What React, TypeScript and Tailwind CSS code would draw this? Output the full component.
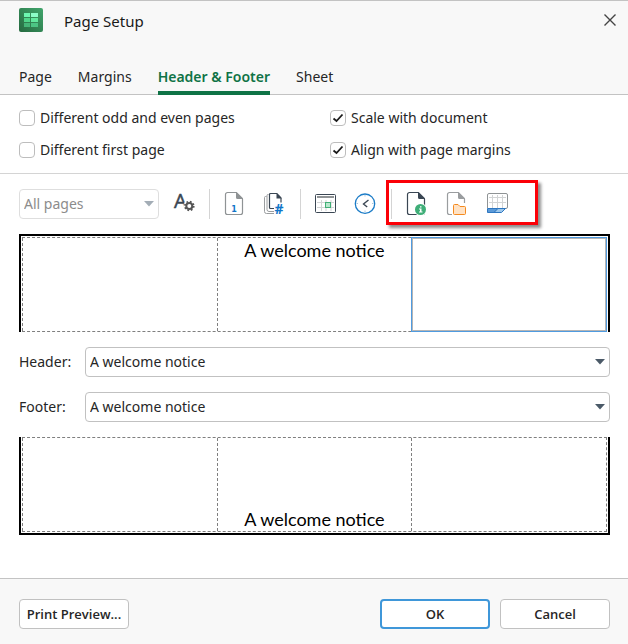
import { useState } from "react";
import type { ReactNode } from "react";

const tabs = ["Page", "Margins", "Header & Footer", "Sheet"];
const presets = ["A welcome notice", "(none)", "Page 1"];

const AppIcon = () => (
  <svg width="24" height="24" viewBox="0 0 24 24" aria-hidden="true">
    <defs>
      <linearGradient id="tile" x1="0" y1="1" x2="1" y2="0">
        <stop offset="0" stopColor="#25693f" />
        <stop offset="1" stopColor="#41a56c" />
      </linearGradient>
    </defs>
    <rect width="24" height="24" rx="2" fill="url(#tile)" />
    <path d="M5 5h6v4H5z" fill="#6df5b0" />
    <path d="M12 5h7v4h-7z" fill="#8cfcc8" />
    <path d="M5 10h6v4H5z" fill="#4fd489" />
    <path d="M12 10h7v4h-7z" fill="#62e89f" />
    <path d="M5 15h6v4H5z" fill="#45b577" />
    <path d="M12 15h7v4h-7z" fill="#4cc584" />
  </svg>
);

const Icon = ({ children }: { children: ReactNode }) => (
  <svg
    width="24"
    height="24"
    viewBox="0 0 24 24"
    fill="none"
    aria-hidden="true"
    className="overflow-visible font-['DejaVu_Sans',sans-serif]"
  >
    {children}
  </svg>
);

const FontIcon = () => (
  <Icon>
    <text
      x="2"
      y="16"
      fontSize="20"
      fill="#3a4653"
      stroke="#3a4653"
      strokeWidth="0.5"
      className="font-['Open_Sans',sans-serif]"
    >
      A
    </text>
    <circle cx="17.3" cy="14" r="6" fill="#fff" />
    <circle cx="17.3" cy="14" r="4.4" stroke="#555" strokeWidth="1.8" strokeDasharray="1.73 1.73" />
    <circle cx="17.3" cy="14" r="3" stroke="#555" strokeWidth="2" />
  </Icon>
);

const PageShape = ({ color }: { color: string }) => (
  <>
    <path
      d="M13.5.5h-9a2 2 0 0 0-2 2v18a2 2 0 0 0 2 2h13a2 2 0 0 0 2-2V7"
      stroke={color}
      strokeWidth="1.2"
    />
    <path d="M13 0h.7L20 6.3V7h-5.5A1.5 1.5 0 0 1 13 5.5z" fill={color} />
  </>
);

const PageNumberIcon = () => (
  <Icon>
    <PageShape color="#8f9395" />
    <text x="11" y="20" fontSize="8" fontWeight="700" textAnchor="middle" fill="#1176c8">
      1
    </text>
  </Icon>
);

const PageCountIcon = () => (
  <Icon>
    <path d="M3.5 4.5h-1a1 1 0 0 0-1 1v14a2 2 0 0 0 2 2H11" stroke="#9a9d9f" />
    <path d="M5.5 2.5H5a1 1 0 0 0-1 1v14a2 2 0 0 0 2 2h5" stroke="#9a9d9f" />
    <path d="M14 1.5H7.5a1 1 0 0 0-1 1v13a1 1 0 0 0 1 1H11M18 6v4.5" stroke="#3a4653" strokeWidth="1.2" />
    <path d="M13.5 1h.7L18.500 5.500v1h-5z" fill="#3a4653" />
    <text
      x="16"
      y="21.5"
      fontSize="14"
      fontWeight="700"
      textAnchor="middle"
      fill="#1176c8"
      className="font-['Open_Sans',sans-serif]"
    >
      #
    </text>
  </Icon>
);

const DateIcon = () => (
  <Icon>
    <rect x="1.5" y="2.5" width="20" height="18" rx="1" stroke="#3a4653" />
    <path d="M3 5h17" stroke="#8f9395" strokeWidth="2" />
    <path d="M3 10.5h17M3 15.5h17M7.5 8v11M12 8v11M17 8v11" stroke="#d2d4d5" />
    <rect x="11.5" y="10.5" width="5" height="5" fill="#b8e8cd" stroke="#41ae76" />
  </Icon>
);

const TimeIcon = () => (
  <Icon>
    <circle cx="11" cy="11.7" r="9.7" stroke="#1c7cc7" strokeWidth="1.3" />
    <path d="M14.5 8 9.5 12l3.7 3" stroke="#3a4653" strokeWidth="1.4" />
    <path d="M11 3v1.5M11 18.5V20M2.5 11.5H4M18 11.5h1.5" stroke="#a9c6dd" />
  </Icon>
);

const FilePathIcon = () => (
  <Icon>
    <PageShape color="#3a4653" />
    <circle cx="15.5" cy="17.5" r="6.5" fill="#fff" />
    <circle cx="15.5" cy="17.5" r="5.5" fill="#3fae78" />
    <path d="M15 14.2h1.5v1.3H15zM14 16.500h2.500v3h1v1H14v-1h1v-2h-1z" fill="#fff" />
  </Icon>
);

const FileNameIcon = () => (
  <Icon>
    <PageShape color="#9a9d9f" />
    <path d="M7 11h15v13H7z" fill="#fff" />
    <path
      d="M8.5 21.5v-8a1 1 0 0 1 1-1H13l2 2h4.5a1 1 0 0 1 1 1v6a1 1 0 0 1-1 1h-10a1 1 0 0 1-1-1z"
      fill="#ffe2c4"
      stroke="#f58a1f"
    />
  </Icon>
);

const SheetNameIcon = () => (
  <Icon>
    <path
      d="M2.5 16V3A1.5 1.5 0 0 1 4 1.5h17A1.5 1.5 0 0 1 22.5 3v12a1.5 1.5 0 0 1-1.5 1.5h-1"
      stroke="#8f9395"
    />
    <path d="M4 5.5h17M4 10.5h17M7.5 3v13M12.5 3v13M17.5 3v13" stroke="#d2d4d5" />
    <path d="M2.5 16.5h10.5l-4 4H2.500z" fill="#5b9ad8" stroke="#2d76c0" />
    <path d="M13 16.5h7.5l-4 4H9z" fill="#9cc7ec" stroke="#2d76c0" />
  </Icon>
);

const ToolButton = ({ label, children }: { label: string; children: ReactNode }) => (
  <button type="button" aria-label={label} title={label} className="h-6 w-6 shrink-0">
    {children}
  </button>
);

const Separator = () => <div className="mx-[13px] h-[30px] w-px shrink-0 bg-[#d4d4d4]" />;

const Arrow = ({ className }: { className: string }) => (
  <svg
    width="10"
    height="6"
    viewBox="0 0 10 6"
    aria-hidden="true"
    className={`pointer-events-none absolute top-3 right-[5px] ${className}`}
  >
    <path d="M0 0h10L5 5.5z" fill="currentColor" />
  </svg>
);

const CheckOption = ({ label, initial = false }: { label: string; initial?: boolean }) => {
  const [checked, setChecked] = useState(initial);
  return (
    <label className="flex h-8 items-center gap-[5px]">
      <span className="relative h-4 w-4 shrink-0">
        <input
          type="checkbox"
          checked={checked}
          onChange={(e) => setChecked(e.target.checked)}
          className="block h-4 w-4 appearance-none rounded border border-[#bdbdbd] bg-white"
        />
        {checked && (
          <svg
            width="16"
            height="16"
            viewBox="0 0 16 16"
            fill="none"
            aria-hidden="true"
            className="pointer-events-none absolute inset-0"
          >
            <path d="M3.5 8.5 6.5 11 12.5 4.5" stroke="#1a1a1a" strokeWidth="1.8" />
          </svg>
        )}
      </span>
      {label}
    </label>
  );
};

const PresetRow = ({
  id,
  label,
  value,
  onChange,
}: {
  id: string;
  label: string;
  value: string;
  onChange: (value: string) => void;
}) => (
  <div className="flex items-center">
    <label htmlFor={id} className="w-[66px] shrink-0">
      {label}
    </label>
    <div className="relative flex-1">
      <select
        id={id}
        value={value}
        onChange={(e) => onChange(e.target.value)}
        className="block h-[30px] w-full appearance-none rounded border border-[#c1c1c1] bg-white pl-1"
      >
        {presets.map((preset) => (
          <option key={preset}>{preset}</option>
        ))}
      </select>
      <Arrow className="text-[#4b5a68]" />
    </div>
  </div>
);

const sections = ["Left", "Center", "Right"];

const Preview = ({
  kind,
  text,
  selected,
}: {
  kind: "Header" | "Footer";
  text: string;
  selected?: string;
}) => (
  <div
    className={`h-[98px] border-x-2 border-black px-px ${
      kind === "Header" ? "border-t-2 pt-px" : "border-b-2 pb-px"
    }`}
  >
    <div className="grid h-full grid-cols-3 border-y border-r border-dashed border-[#7f7f7f]">
      {sections.map((section) => (
        <div
          key={section}
          className={`flex ${kind === "Header" ? "items-start" : "items-end"} ${
            section === selected
              ? "-my-px -mr-px border border-[#4f9be0] ring-1 ring-[#b5b5b5] ring-inset"
              : "border-l border-dashed border-[#7f7f7f]"
          }`}
        >
          <input
            type="text"
            aria-label={`${kind} ${section.toLowerCase()} section`}
            defaultValue={section === "Center" ? text : ""}
            key={text}
            className="h-6 w-full min-w-0 bg-transparent text-center font-['Lato',sans-serif] text-[18px] leading-6 text-black outline-none"
          />
        </div>
      ))}
    </div>
  </div>
);

const App = () => {
  const [activeTab, setActiveTab] = useState("Header & Footer");
  const [header, setHeader] = useState("A welcome notice");
  const [footer, setFooter] = useState("A welcome notice");

  return (
    <div className="flex min-h-screen flex-col border-t border-[#c3c3c3] bg-white font-['Noto_Sans',sans-serif] text-[14px] leading-5 text-[#262626]">
      <header className="border-b border-[#c3c3c3] bg-[#f8f8f8] pt-[7px] pr-3 pl-[19px]">
        <div className="flex items-start">
          <AppIcon />
          <h1 className="ml-[21px] flex-1 pt-[3px] text-[15px] leading-5 text-[#1a1a1a]">Page Setup</h1>
          <button type="button" aria-label="Close" className="pt-[6px]">
            <svg width="12" height="12" viewBox="0 0 12 12" aria-hidden="true">
              <path d="M.5.5l11 11M11.5.5l-11 11" stroke="#444" strokeWidth="1.4" />
            </svg>
          </button>
        </div>
        <div role="tablist" className="mt-[27px] -mb-px flex gap-[26px]">
          {tabs.map((tab) => (
            <button
              key={tab}
              type="button"
              role="tab"
              aria-selected={tab === activeTab}
              onClick={() => setActiveTab(tab)}
              className={`h-9 border-b-4 pt-1 ${
                tab === activeTab
                  ? "border-[#0f7346] font-semibold text-[#0f7346]"
                  : "border-transparent"
              }`}
            >
              {tab}
            </button>
          ))}
        </div>
      </header>

      <main className="flex-1">
        <div className="grid grid-cols-[311px_1fr] border-b border-[#d4d4d4] py-[7px] pl-[19px]">
          <CheckOption label="Different odd and even pages" />
          <CheckOption label="Scale with document" initial />
          <CheckOption label="Different first page" />
          <CheckOption label="Align with page margins" initial />
        </div>

        <div className="pr-[18px] pl-[19px]">
          <div className="flex h-[60px] items-center">
            <div className="relative w-[140px] shrink-0">
              <select
                disabled
                aria-label="Pages"
                className="block h-[30px] w-full appearance-none rounded border border-[#dedede] bg-white pl-1 text-[#8c8c8c] opacity-100"
              >
                <option>All pages</option>
              </select>
              <Arrow className="text-[#a3adb6]" />
            </div>
            <div className="ml-[13px] flex">
              <ToolButton label="Font">
                <FontIcon />
              </ToolButton>
            </div>
            <Separator />
            <div className="flex gap-4">
              <ToolButton label="Page number">
                <PageNumberIcon />
              </ToolButton>
              <ToolButton label="Number of pages">
                <PageCountIcon />
              </ToolButton>
            </div>
            <Separator />
            <div className="flex gap-4">
              <ToolButton label="Date">
                <DateIcon />
              </ToolButton>
              <ToolButton label="Time">
                <TimeIcon />
              </ToolButton>
            </div>
            <div className="relative flex items-center pr-[29px]">
              <Separator />
              <div className="flex gap-4">
                <ToolButton label="File path">
                  <FilePathIcon />
                </ToolButton>
                <ToolButton label="File name">
                  <FileNameIcon />
                </ToolButton>
                <ToolButton label="Sheet name">
                  <SheetNameIcon />
                </ToolButton>
              </div>
              <div className="pointer-events-none absolute -top-[9px] right-0 -bottom-[6px] left-2 border-3 border-[#fb0007] shadow-[3px_3px_3px_rgba(0,0,0,0.45)]" />
            </div>
          </div>

          <Preview kind="Header" text={header} selected="Right" />
          <div className="my-[15px] flex flex-col gap-[15px]">
            <PresetRow id="header" label="Header:" value={header} onChange={setHeader} />
            <PresetRow id="footer" label="Footer:" value={footer} onChange={setFooter} />
          </div>
          <Preview kind="Footer" text={footer} />
        </div>
      </main>

      <footer className="mt-6 flex gap-[10px] border-t border-[#c3c3c3] bg-[#f8f8f8] pt-5 pr-[18px] pb-[15px] pl-[19px] font-['Open_Sans',sans-serif] text-[13px] font-semibold">
        <button type="button" className="mr-auto h-[30px] w-[110px] rounded border border-[#c1c1c1] bg-white">
          Print Preview...
        </button>
        <button type="button" className="h-[30px] w-[110px] rounded border-2 border-[#3f97d9] bg-white">
          OK
        </button>
        <button type="button" className="h-[30px] w-[110px] rounded border border-[#c1c1c1] bg-white">
          Cancel
        </button>
      </footer>
    </div>
  );
};

export default App;
